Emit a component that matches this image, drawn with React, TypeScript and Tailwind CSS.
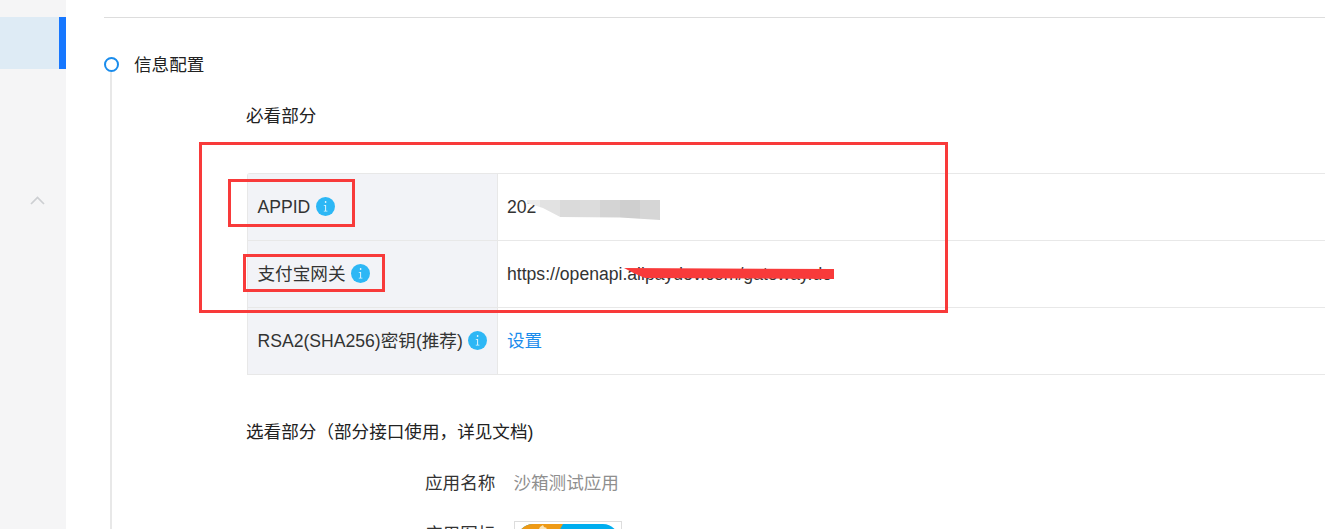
import React from "react";

const font = { fontFamily: '"Liberation Sans", "Noto Sans CJK SC", sans-serif' };

function Info() {
  return (
    <svg width="19" height="19" viewBox="0 0 19 19" className="shrink-0 mb-[2px]">
      <circle cx="9.5" cy="9.5" r="9.5" fill="#2db7f5" />
      <rect x="8.9" y="4.2" width="1.4" height="1.6" fill="#fff" />
      <path d="M7.8 8h2.3v5.8h1.3v.8H7.8v-.8h1.3V8.8H7.8z" fill="#fff" opacity="0.85" />
    </svg>
  );
}

function Row({ label, children, last }: { label: string; children: React.ReactNode; last?: boolean }) {
  return (
    <div className={`flex ${last ? "h-[66px]" : "h-[67px] border-b border-[#e8e8e8]"}`}>
      <div className="w-[250px] shrink-0 bg-[#f2f3f7] border-r border-[#e8e8e8] pl-[9.5px] flex items-center gap-[5.5px] text-[#333]">
        <span className="whitespace-nowrap">{label}</span>
        <Info />
      </div>
      <div className="flex-1 pl-[9px] flex items-center text-[#333] whitespace-nowrap">{children}</div>
    </div>
  );
}

export default function App() {
  return (
    <div className="w-[1325px] h-[529px] overflow-hidden flex bg-white relative text-[17.6px] leading-[24px]" style={font}>
      <aside className="w-[66px] shrink-0 bg-[#f5f5f6] pt-[17px]">
        <div className="h-[52px] bg-[#deebf5] flex justify-end">
          <div className="w-[7px] bg-[#1677ff]" />
        </div>
        <div className="mt-[127px] pl-[30px]">
          <svg width="15" height="9" viewBox="0 0 15 9" fill="none" className="block">
            <path d="M1 8L7.5 1.5L14 8" stroke="#cdcfd2" strokeWidth="1.7" />
          </svg>
        </div>
      </aside>

      <main className="flex-1 min-w-0 pl-[38px] pt-[17px]">
        <div className="border-t border-[#ddd]" />
        <div className="mt-[39px] flex">
          <div className="w-[14px] shrink-0 flex flex-col items-center h-[480px]">
            <div className="w-[15px] h-[15px] shrink-0 rounded-full border-[2.5px] border-[#1a8cec]" />
            <div className="w-[2px] flex-1 bg-[#e8e8e8]" />
          </div>
          <div className="flex-1 min-w-0 pl-[16px]">
            <div className="text-[#222] -mt-[4px]">信息配置</div>
            <div className="ml-[112px] mt-[27px] text-[#222]">必看部分</div>
            <div className="ml-[113px] mt-[45px] border-y border-l border-[#e8e8e8] rounded-tl-[3px] w-[1200px]">
              <Row label="APPID">
                <span>202</span>
              </Row>
              <Row label="支付宝网关">
                <span>https://openapi.alipaydev.com/gateway.do</span>
              </Row>
              <Row label="RSA2(SHA256)密钥(推荐)" last>
                <span className="text-[#1a8cec]">设置</span>
              </Row>
            </div>
            <div className="ml-[112px] mt-[45px] text-[#222]">选看部分（部分接口使用，详见文档)</div>
            <div className="ml-[291px] mt-[27px] flex gap-[18px]">
              <span className="text-[#333]">应用名称</span>
              <span className="text-[#8f8f8f]">沙箱测试应用</span>
            </div>
            <div className="ml-[291px] mt-[26px] flex gap-[19px]">
              <span className="text-[#333] pt-[1px]">应用图标</span>
              <div className="w-[108px] h-[60px] border border-[#ddd] p-[2px] shrink-0">
                <svg viewBox="0 0 102 54" width="102" height="54" className="block">
                  <defs>
                    <clipPath id="app-icon-shape">
                      <rect width="102" height="54" rx="16" />
                    </clipPath>
                  </defs>
                  <g clipPath="url(#app-icon-shape)">
                    <rect width="102" height="54" fill="#00aeef" />
                    <polygon points="0,0 46,0 16,54 0,54" fill="#ee9a16" />
                    <path d="M23 3l3-2 1 2 3 1-2 2-1 2-3-1-2-2z" fill="#fbe3b5" />
                  </g>
                </svg>
              </div>
            </div>
          </div>
        </div>
      </main>

      {/* redaction marks and annotation boxes drawn over the screenshot */}
      <div className="absolute left-[527px] top-[200px] w-[133px] h-[20px] flex" style={{ clipPath: "polygon(0 0,100% 0,100% 100%,70% 88%,25% 85%,12% 40%,0 15%)" }}>
        <div className="w-[13px] bg-[#ececec]" />
        <div className="w-[20px] bg-[#e2e2e2]" />
        <div className="w-[20px] bg-[#dadada]" />
        <div className="w-[20px] bg-[#dcdcdc]" />
        <div className="w-[20px] bg-[#d4d4d4]" />
        <div className="w-[20px] bg-[#cfcfcf]" />
        <div className="w-[20px] bg-[#d6d6d6]" />
      </div>
      <div className="absolute left-[624px] top-[268px] w-[210px] h-[11px] bg-[#f83a3a]" style={{ clipPath: "polygon(0 0,100% 10%,100% 100%,10% 90%,5% 50%)" }} />
      <div className="absolute left-[199px] top-[142px] w-[749px] h-[171px] border-[3px] border-[#f83a3a]" />
      <div className="absolute left-[228px] top-[179px] w-[127px] h-[48px] border-[3px] border-[#f83a3a]" />
      <div className="absolute left-[243px] top-[254px] w-[142px] h-[38px] border-[3px] border-[#f83a3a]" />
    </div>
  );
}
